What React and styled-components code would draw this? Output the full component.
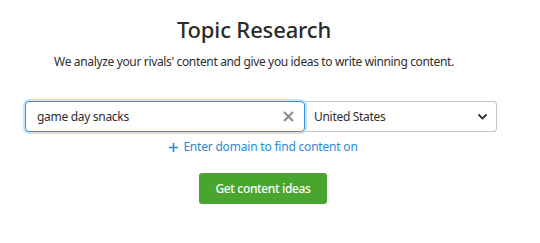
import React, { useState } from 'react';
import styled, { createGlobalStyle } from 'styled-components';

const GlobalStyle = createGlobalStyle`
  html, body {
    margin: 0;
    padding: 0;
    background: #ffffff;
  }
  body {
    font-family: 'Noto Sans', 'Open Sans', sans-serif;
    color: #333333;
  }
`;

const Page = styled.div`
  width: 540px;
  height: 243px;
  box-sizing: border-box;
  padding: 15px 43px 0 25px;
`;

const Header = styled.header`
  padding-right: 14px;
  text-align: center;
`;

const Title = styled.h1`
  margin: 0;
  font-size: 22px;
  line-height: 28px;
  font-weight: 500;
  letter-spacing: -0.15px;
  color: #2b2b2b;
`;

const Subtitle = styled.p`
  margin: 10px 0 0;
  font-size: 12px;
  line-height: 18px;
  letter-spacing: -0.35px;
  color: #2e2e2e;
`;

const SearchRow = styled.div`
  display: flex;
  margin-top: 30px;
  height: 31px;
`;

const InputBox = styled.div`
  flex: 0 0 280px;
  display: flex;
  align-items: center;
  box-sizing: border-box;
  border: 1px solid #2f8fd8;
  border-radius: 4px;
  box-shadow: 0 0 0 2px #cfe4f6;
  background: #fff;
  padding: 0 10px 0 11px;
  position: relative;
  z-index: 1;
`;

const Input = styled.input`
  flex: 1;
  min-width: 0;
  border: none;
  outline: none;
  font: inherit;
  font-size: 12px;
  letter-spacing: -0.3px;
  color: #2e2e2e;
  padding: 0;
  background: transparent;
`;

const ClearButton = styled.button`
  border: none;
  background: none;
  padding: 0;
  display: flex;
  cursor: pointer;
`;

const Select = styled.div`
  flex: 1;
  display: flex;
  align-items: center;
  justify-content: space-between;
  box-sizing: border-box;
  border: 1px solid #c2c6c9;
  border-left: none;
  border-radius: 0 4px 4px 0;
  padding: 0 9px 0 9px;
  font-size: 12px;
  letter-spacing: -0.3px;
  color: #2e2e2e;
`;

const DomainLink = styled.a`
  display: flex;
  justify-content: center;
  align-items: center;
  gap: 5px;
  margin-top: 6px;
  padding-left: 5px;
  font-size: 12px;
  line-height: 18px;
  letter-spacing: -0.2px;
  color: #2a8ad4;
  text-decoration: none;
  cursor: pointer;
`;

const ButtonRow = styled.div`
  display: flex;
  justify-content: center;
  margin-top: 17px;
  padding-left: 4px;
`;

const PrimaryButton = styled.button`
  width: 128px;
  height: 31px;
  border: none;
  border-radius: 3px;
  background: #4aa52e;
  color: #ffffff;
  font-family: inherit;
  font-size: 12px;
  font-weight: 500;
  letter-spacing: -0.35px;
  cursor: pointer;
`;

const CloseIcon = () => (
  <svg width="11" height="11" viewBox="0 0 11 11">
    <path d="M1 1 L10 10 M10 1 L1 10" stroke="#8a8a8a" strokeWidth="2" />
  </svg>
);

const Chevron = () => (
  <svg width="9" height="6" viewBox="0 0 9 6">
    <path d="M1 1 L4.5 4.5 L8 1" fill="none" stroke="#333" strokeWidth="1.8" strokeLinecap="round" strokeLinejoin="round" />
  </svg>
);

const PlusIcon = () => (
  <svg width="9" height="9" viewBox="0 0 9 9">
    <path d="M4.5 0 V9 M0 4.5 H9" stroke="#2a8ad4" strokeWidth="1.6" />
  </svg>
);

export default function App() {
  const [query, setQuery] = useState('game day snacks');

  return (
    <>
      <GlobalStyle />
      <Page>
        <Header>
          <Title>Topic Research</Title>
          <Subtitle>We analyze your rivals' content and give you ideas to write winning content.</Subtitle>
        </Header>
        <SearchRow>
          <InputBox>
            <Input value={query} onChange={(e) => setQuery(e.target.value)} />
            <ClearButton onClick={() => setQuery('')}>
              <CloseIcon />
            </ClearButton>
          </InputBox>
          <Select>
            <span>United States</span>
            <Chevron />
          </Select>
        </SearchRow>
        <DomainLink>
          <PlusIcon />
          Enter domain to find content on
        </DomainLink>
        <ButtonRow>
          <PrimaryButton>Get content ideas</PrimaryButton>
        </ButtonRow>
      </Page>
    </>
  );
}
